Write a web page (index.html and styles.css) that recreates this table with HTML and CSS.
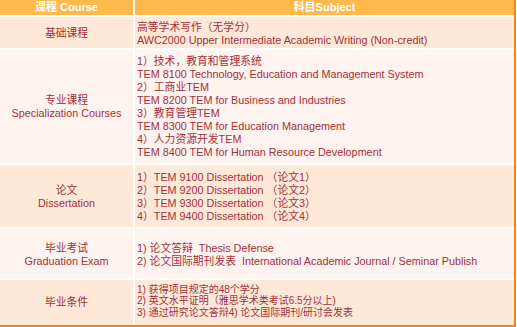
FILE: index.html
```html
<!DOCTYPE html>
<html lang="zh">
<head>
<meta charset="utf-8">
<link rel="stylesheet" href="styles.css">
</head>
<body>
<div class="frame">
  <div class="grid">
    <div class="head">课程 Course</div>
    <div class="head">科目Subject</div>

    <div class="cell left peach r1">基础课程</div>
    <div class="cell right peach r1">高等学术写作（无学分）<br>AWC2000 Upper Intermediate Academic Writing (Non-credit)</div>

    <div class="cell left light r2">专业课程<br>Specialization Courses</div>
    <div class="cell right light r2">1）技术，教育和管理系统<br>TEM 8100 Technology, Education and Management System<br>2）工商业TEM<br>TEM 8200 TEM for Business and Industries<br>3）教育管理TEM<br>TEM 8300 TEM for Education Management<br>4）人力资源开发TEM<br>TEM 8400 TEM for Human Resource Development</div>

    <div class="cell left peach r3">论文<br>Dissertation</div>
    <div class="cell right peach r3">1）TEM 9100 Dissertation （论文1）<br>2）TEM 9200 Dissertation （论文2）<br>3）TEM 9300 Dissertation （论文3）<br>4）TEM 9400 Dissertation （论文4）</div>

    <div class="cell left light r4">毕业考试<br>Graduation Exam</div>
    <div class="cell right light r4">1) 论文答辩&nbsp; Thesis Defense<br>2) 论文国际期刊发表&nbsp; International Academic Journal / Seminar Publish</div>

    <div class="cell left peach r5">毕业条件</div>
    <div class="cell right peach r5"><div class="tight">1) 获得项目规定的48个学分<br>2) 英文水平证明（雅思学术类考试6.5分以上)<br>3) 通过研究论文答辩4) 论文国际期刊/研讨会发表</div></div>
  </div>
</div>
</body>
</html>
```
FILE: styles.css
```css
html, body {
  margin: 0;
  padding: 0;
  background: #ffffff;
}
body {
  width: 517px;
  height: 327px;
  overflow: hidden;
  font-family: "Liberation Sans", "Noto Sans CJK SC", sans-serif;
}
.frame {
  width: 514px;
  height: 325px;
  border-right: 2px solid #f5841f;
  border-bottom: 2px solid #f5841f;
  background: #ffffff;
}
.grid {
  display: grid;
  grid-template-columns: 133px 1fr;
  grid-template-rows: 15px 31px 113px 62px 49px 45px;
  column-gap: 2px;
  row-gap: 2px;
  height: 325px;
}
.head {
  background: #fdb94c;
  color: #ffffff;
  font-weight: bold;
  font-size: 11px;
  line-height: 15px;
  text-align: center;
}
.cell {
  color: #a3303b;
  font-size: 10.8px;
  line-height: 13px;
  display: flex;
  align-items: center;
}
.left {
  justify-content: center;
  text-align: center;
}
.right {
  padding-left: 2px;
}
.peach { background: #fee9d8; }
.light { background: #fef3ee; }
.r1 { padding-top: 2px; }
.r3 { line-height: 12.8px; padding-top: 2px; }
.r4 { padding-top: 2px; }
.tight {
  font-size: 10px;
  line-height: 11.6px;
  padding-bottom: 3px;
}
```
